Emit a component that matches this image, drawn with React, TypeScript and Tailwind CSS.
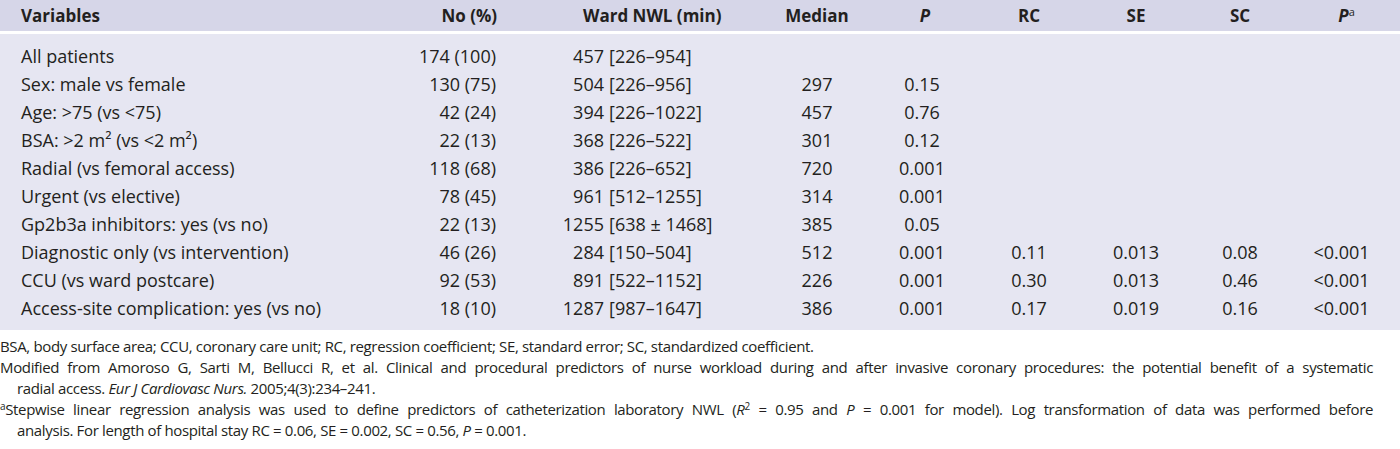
import React from "react";

type Row = {
  label: string;
  n: string;
  ward: [string, string];
  median?: string;
  p?: string;
  rc?: string;
  se?: string;
  sc?: string;
  pa?: string;
};

const rows: Row[] = [
  { label: "All patients", n: "174 (100)", ward: ["457", "[226–954]"] },
  { label: "Sex: male vs female", n: "130 (75)", ward: ["504", "[226–956]"], median: "297", p: "0.15" },
  { label: "Age: >75 (vs <75)", n: "42 (24)", ward: ["394", "[226–1022]"], median: "457", p: "0.76" },
  { label: "BSA: >2 m² (vs <2 m²)", n: "22 (13)", ward: ["368", "[226–522]"], median: "301", p: "0.12" },
  { label: "Radial (vs femoral access)", n: "118 (68)", ward: ["386", "[226–652]"], median: "720", p: "0.001" },
  { label: "Urgent (vs elective)", n: "78 (45)", ward: ["961", "[512–1255]"], median: "314", p: "0.001" },
  { label: "Gp2b3a inhibitors: yes (vs no)", n: "22 (13)", ward: ["1255", "[638 ± 1468]"], median: "385", p: "0.05" },
  {
    label: "Diagnostic only (vs intervention)",
    n: "46 (26)",
    ward: ["284", "[150–504]"],
    median: "512",
    p: "0.001",
    rc: "0.11",
    se: "0.013",
    sc: "0.08",
    pa: "<0.001",
  },
  {
    label: "CCU (vs ward postcare)",
    n: "92 (53)",
    ward: ["891", "[522–1152]"],
    median: "226",
    p: "0.001",
    rc: "0.30",
    se: "0.013",
    sc: "0.46",
    pa: "<0.001",
  },
  {
    label: "Access-site complication: yes (vs no)",
    n: "18 (10)",
    ward: ["1287", "[987–1647]"],
    median: "386",
    p: "0.001",
    rc: "0.17",
    se: "0.019",
    sc: "0.16",
    pa: "<0.001",
  },
];

const grid = "grid grid-cols-[400px_105px_260px_104px_106px_108px_106px_102px_101px]";

export default function App() {
  return (
    <div className="w-[1400px] bg-white text-[#231f20] font-['Open_Sans',sans-serif]">
      <div className="bg-[#e6e6f2]">
        <div className={`${grid} h-[31px] items-center bg-[#d6d6e8] text-[17px] font-bold`}>
          <div className="pl-[21px]">Variables</div>
          <div className="text-right pr-[8px]">No (%)</div>
          <div className="pl-[78px]">Ward NWL (min)</div>
          <div className="text-center">Median</div>
          <div className="text-center pl-[6px] italic">P</div>
          <div className="text-center">RC</div>
          <div className="text-center">SE</div>
          <div className="text-center">SC</div>
          <div className="text-center pl-[10px]">
            <span className="italic">P</span>
            <sup className="text-[11px] font-normal">a</sup>
          </div>
        </div>
        <div className="h-[3px] bg-white" />
        <div className="py-[8px] text-[18px]">
          {rows.map((r) => (
            <div key={r.label} className={`${grid} h-[28px] items-center`}>
              <div className="pl-[21px] whitespace-nowrap">{r.label}</div>
              <div className="text-right pr-[9px]">{r.n}</div>
              <div className="flex gap-[5px] whitespace-nowrap">
                <span className="w-[99px] text-right">{r.ward[0]}</span>
                <span>{r.ward[1]}</span>
              </div>
              <div className="text-center">{r.median}</div>
              <div className="text-center">{r.p}</div>
              <div className="text-center">{r.rc}</div>
              <div className="text-center">{r.se}</div>
              <div className="text-center">{r.sc}</div>
              <div className="text-center">{r.pa}</div>
            </div>
          ))}
        </div>
      </div>
      <div className="w-[1373px] pt-[6px] text-[15px] leading-[21px] tracking-[-0.35px]">
        <p>
          BSA, body surface area; CCU, coronary care unit; RC, regression coefficient; SE, standard error; SC,
          standardized coefficient.
        </p>
        <p>
          <span className="block text-justify [text-align-last:justify]">
            Modified from Amoroso G, Sarti M, Bellucci R, et al. Clinical and procedural predictors of nurse workload
            during and after invasive coronary procedures: the potential benefit of a systematic
          </span>
          <span className="block pl-[17px]">
            radial access. <i>Eur J Cardiovasc Nurs.</i> 2005;4(3):234–241.
          </span>
        </p>
        <p>
          <span className="block text-justify [text-align-last:justify]">
            <sup className="text-[10px]">a</sup>Stepwise linear regression analysis was used to define predictors of
            catheterization laboratory NWL (<i>R</i>
            <sup className="text-[10px]">2</sup> = 0.95 and <i>P</i> = 0.001 for model). Log transformation of data
            was performed before
          </span>
          <span className="block pl-[17px]">
            analysis. For length of hospital stay RC = 0.06, SE = 0.002, SC = 0.56, <i>P</i> = 0.001.
          </span>
        </p>
      </div>
    </div>
  );
}
